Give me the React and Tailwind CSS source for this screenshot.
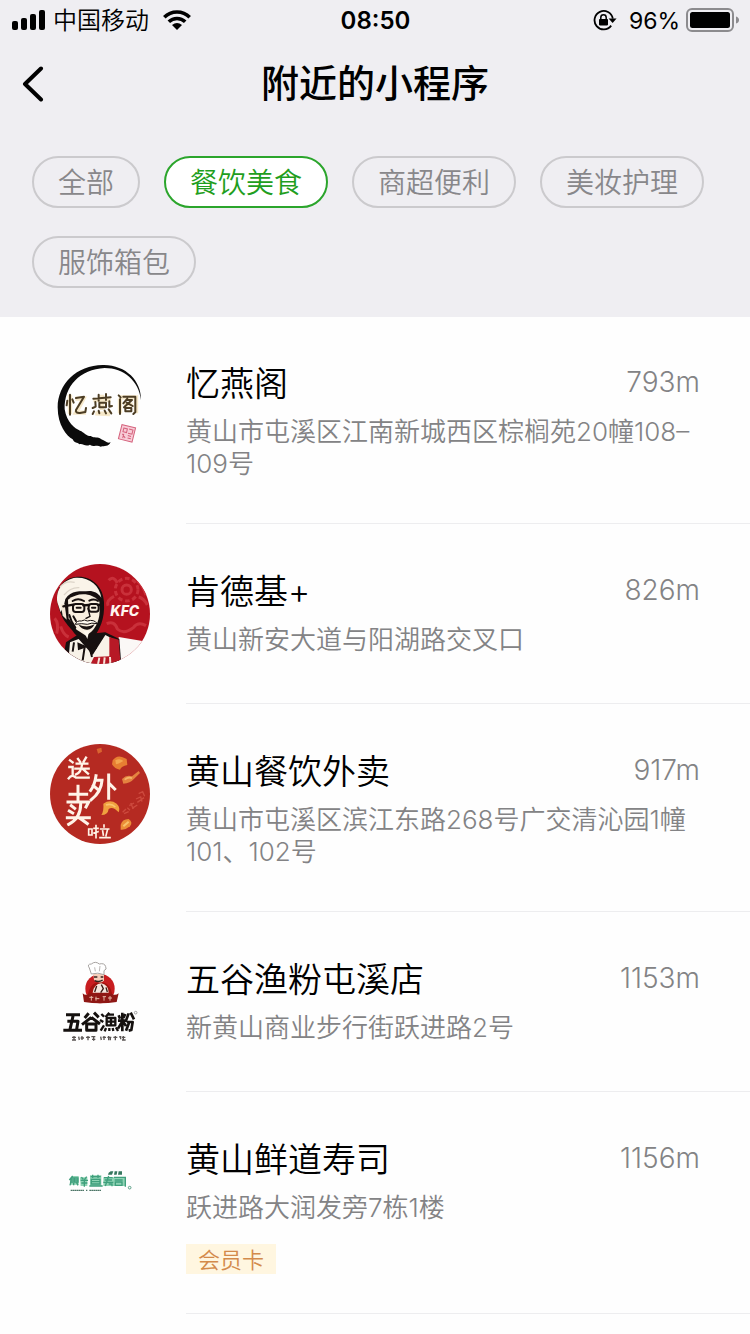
import React, { useState } from "react";

const CATEGORIES = ["全部", "餐饮美食", "商超便利", "美妆护理", "服饰箱包"];

function InkCircleLogo() {
  return (
    <svg viewBox="30 18 300 300" className="size-full" aria-hidden="true">
      <path
        d="M303 150 C304 92 258 46 192 45 C112 43 53 102 53 172 C53 226 80 258 98 268 C103 280 112 276 118 283 C128 279 136 292 150 284 C160 292 172 284 182 290 C194 287 205 291 212 277 C200 281 196 272 184 268 C172 258 164 266 152 258 C138 258 132 246 120 242 C104 236 80 216 74 178 C72 108 120 58 194 54 C252 54 296 92 303 150 Z"
        fill="#0b0b0b"
      />
      <g fill="none" stroke="#f4dfb4" strokeWidth="13" opacity="0.7">
        <path d="M90 134 V192 M106 146 H130 L108 188 H138" />
        <path d="M160 150 H212 M186 134 V180 M166 190 L210 192" />
        <path d="M236 142 H288 V190 M240 146 V190 M252 164 H278" />
      </g>
      <g fill="none" stroke="#4c3d24" strokeWidth="6" strokeLinecap="round" strokeLinejoin="round">
        <path d="M90 134 V194 M82 152 L80 166 M97 148 L101 158 M108 144 L132 140 L108 180 Q106 190 120 189 L136 186 L138 174" />
        <path d="M160 146 L212 142 M176 134 V152 M198 132 V150 M178 158 H198 V172 H178 Z M166 156 L167 170 L158 174 M208 154 V170 L216 168 M162 184 L158 192 M176 182 L178 190 M194 182 L198 190 M206 178 L214 190" />
        <path d="M240 148 V192 M236 136 L242 142 M250 140 H286 V186 L280 192 M262 146 L250 160 M260 150 H276 L252 172 M260 158 L278 168 M256 174 H274 V184 H256 Z" />
      </g>
      <g transform="rotate(14 261 250)" fill="none" stroke="#d4627c" strokeWidth="3">
        <rect x="240" y="228" width="42" height="44" fill="#f8ccd7" />
        <path d="M248 237 H259 V248 H248 Z M264 236 H276 V249 H264 M248 255 L259 265 M252 254 V267 M265 256 H275 M266 263 H276" />
      </g>
    </svg>
  );
}

function KfcLogo() {
  return (
    <svg viewBox="30 27 300 300" className="size-full" aria-hidden="true">
      <defs>
        <clipPath id="kfc-clip">
          <circle cx="180" cy="177" r="150" />
        </clipPath>
      </defs>
      <g clipPath="url(#kfc-clip)">
        <rect x="30" y="27" width="300" height="300" fill="#b5121f" />
        <g fill="none" stroke="#c9303a" strokeWidth="9">
          <circle cx="260" cy="104" r="14" />
          <circle cx="260" cy="104" r="34" strokeDasharray="14 8" />
          <path d="M206 76 Q220 60 232 84 M222 124 Q198 136 204 152 M292 78 Q310 92 318 120 M200 206 Q224 196 232 222 Q252 240 280 218 Q294 198 318 212 M296 126 Q312 130 322 150 M44 190 Q58 206 50 236 M62 214 Q70 240 86 246" />
        </g>
        <path d="M236 246 L330 262 V330 H236 Z" fill="#fbf8f6" />
        <path d="M66 330 L78 262 L112 240 L196 232 L238 252 L244 330 Z" fill="#161010" />
        <path d="M84 330 L90 262 L116 252 L158 300 L196 240 L212 248 L214 330 Z" fill="#f8f2e8" />
        <path d="M150 330 L162 306 L208 304 L208 246 L236 254 L242 330 Z" fill="#b71926" />
        <path d="M178 308 L174 328 M194 307 L192 328 M210 306 L211 328" stroke="#f8e6dc" strokeWidth="6" />
        <path d="M56 156 C42 112 62 72 106 66 C150 60 190 92 192 142 C195 196 178 224 160 250 L136 266 L104 236 C92 216 68 204 56 156 Z" fill="#17100f" />
        <path d="M52 142 C46 104 70 72 108 68 C148 66 178 90 184 128 C174 114 162 108 148 108 C120 110 94 104 76 132 L72 150 L62 172 Z" fill="#faf4e9" />
        <path d="M84 134 C112 110 158 112 178 140 C182 180 176 208 154 230 L138 242 L110 224 L86 190 Z" fill="#f9efdf" />
        <path d="M62 148 L74 148 L80 194 L68 182 Z" fill="#f5e8d6" />
        <path d="M60 96 Q76 76 104 82 M72 120 Q92 96 118 98" stroke="#dcd4c8" strokeWidth="4" fill="none" />
        <g fill="none" stroke="#17100f" strokeLinecap="round">
          <path d="M70 154 L100 149 M130 151 L146 150 M174 150 L188 150" strokeWidth="7" />
          <rect x="99" y="147" width="34" height="24" rx="8" strokeWidth="6" />
          <rect x="146" y="147" width="30" height="23" rx="8" strokeWidth="6" />
          <path d="M98 138 Q114 128 132 138 M148 137 Q162 130 174 138" strokeWidth="6" />
          <path d="M110 158 H122 M156 158 H166" strokeWidth="6" />
          <path d="M144 160 L150 184 L138 190" strokeWidth="4" />
          <path d="M88 180 Q92 198 106 218 M100 184 L108 198" strokeWidth="6" />
        </g>
        <path d="M106 208 Q110 196 124 198 Q134 192 142 198 Q162 192 172 206 Q154 202 142 208 Q126 204 106 208 Z" fill="#fffaf0" stroke="#17100f" strokeWidth="3" />
        <path d="M116 209 Q142 220 164 208 Q154 226 140 224 Q124 222 116 209 Z" fill="#17100f" />
        <path d="M130 226 Q140 232 148 226 L142 252 Z" fill="#fff9ee" />
        <path d="M112 262 L136 272 L168 260 L170 282 L142 276 L114 286 Z" fill="#17100f" />
        <path d="M134 276 L128 316 M148 276 L156 306 M102 262 L98 290" stroke="#17100f" strokeWidth="6" />
        <text x="211" y="182" fontSize="42" fontStyle="italic" fontWeight="800" fill="#fff5ef" className="font-['Inter']">
          KFC
        </text>
      </g>
    </svg>
  );
}

function TakeawayLogo() {
  return (
    <svg viewBox="30 27 300 300" className="size-full" aria-hidden="true">
      <circle cx="180" cy="177" r="150" fill="#b52a22" />
      <g fill="none" stroke="#fff3e8" strokeLinecap="square" strokeWidth="7">
        <path d="M90 76 L98 82 M88 96 H98 V118 M86 130 Q96 116 108 128 H146 M114 72 L120 80 M138 68 L131 80 M110 86 H142 M106 101 H146 M126 88 Q124 112 108 118 M128 102 L144 116" />
        <g strokeWidth="9">
          <path d="M168 122 Q164 150 152 166 M166 136 H186 Q184 170 154 194 M160 152 L174 164 M206 120 V190 M208 146 L224 162" />
          <path d="M90 178 H140 M114 154 V198 M84 201 H146 L138 216 M94 212 L104 220 M88 228 L98 234 M82 248 H148 M122 208 Q122 250 86 268 M120 250 L142 266" />
        </g>
        <g strokeWidth="5">
          <path d="M146 282 H156 V300 H146 Z M162 280 H174 M168 272 V308 M162 294 L174 290 M192 270 V276 M182 282 H206 M188 288 L190 300 M202 286 L198 302 M180 308 H210" />
        </g>
      </g>
      <path d="M218 76 Q230 60 246 66 L260 72 L262 90 Q244 94 240 104 Q224 102 216 88 Z" fill="#e77e32" />
      <path d="M226 76 Q240 68 250 78 Q238 86 228 88 Z" fill="#f4a650" />
      <path d="M170 42 L184 38 L186 50 L174 56 Z" fill="#d96430" />
      <path d="M246 132 Q260 118 276 124 L296 108 L300 114 L284 130 Q270 146 250 146 Z" fill="#e48340" />
      <path d="M254 134 Q266 124 276 130" stroke="#f4b56a" strokeWidth="5" fill="none" />
      <path d="M190 206 Q210 192 230 206 Q242 218 236 232 Q218 212 206 222 Q204 240 184 240 Q192 228 190 206 Z" fill="#f0a13f" />
      <path d="M198 210 Q214 204 226 216" stroke="#fac66f" strokeWidth="5" fill="none" />
      <path d="M242 270 Q246 252 266 252 Q280 262 270 274 Q256 286 242 284 Z" fill="#eb8f37" />
      <path d="M250 274 L266 260" stroke="#f9c26b" strokeWidth="6" />
      <path
        d="M248 232 L258 222 M252 236 L266 230 M268 212 L282 204 M272 204 L280 222 M276 220 L292 210 M288 192 L302 186 L306 200 M292 202 L312 188 M296 176 L308 170 L314 184 M262 218 L270 226"
        stroke="#cd4a3e"
        strokeWidth="4"
        fill="none"
      />
    </svg>
  );
}

function FishNoodleLogo() {
  return (
    <svg viewBox="30 6 300 300" className="size-full" aria-hidden="true">
      <circle cx="180" cy="116" r="44" fill="#c81d20" />
      <path d="M142 140 Q150 96 180 96 Q212 96 218 140 Z" fill="#a3130f" />
      <path d="M158 128 Q162 102 184 100 Q206 106 206 128 Z" fill="#f5e7df" />
      <path d="M170 108 L164 126 M184 104 L190 116 L182 128 M198 112 L202 126" stroke="#3b1a15" strokeWidth="4" fill="none" />
      <path d="M160 72 H192 V92 Q178 104 162 90 Z" fill="#f4cdb9" />
      <path d="M154 72 L148 54 Q140 42 154 42 Q166 32 178 42 Q194 38 197 50 Q202 58 192 62 L192 74 Q174 66 154 72 Z" fill="#fff" stroke="#a7a3a1" strokeWidth="3" />
      <path d="M164 52 L166 64 M180 48 L178 64" stroke="#bcb8b6" strokeWidth="3" />
      <path d="M162 81 H172 M182 81 H190 M164 92 Q176 98 188 90" stroke="#33201c" strokeWidth="4" fill="none" />
      <path d="M128 130 Q136 138 146 132 Q180 126 216 132 Q226 138 236 130 L230 156 Q180 164 132 156 Z" fill="#8e1714" />
      <path d="M148 142 H160 M154 138 V152 M168 140 V152 M166 146 H178 M188 140 H198 M192 140 V152 M204 144 H216 M210 138 V152" stroke="#e7b6a6" strokeWidth="3" />
      <g fill="none" stroke="#15110f" strokeWidth="9" strokeLinejoin="round">
        <path d="M78 194 H120 M100 194 L90 238 M82 214 H114 L110 238 M70 241 H126" />
        <path d="M146 190 L134 204 M162 188 L176 202 M154 202 L126 224 M154 202 L180 222 M140 222 H168 V241 H140 Z" />
        <path d="M184 192 L192 200 M180 210 L190 216 M182 242 L192 226 M208 188 L196 202 M202 194 H222 M200 204 H226 V226 H200 Z M213 204 V226 M200 215 H226 M198 234 L194 244 M208 234 V243 M218 234 L220 243 M228 232 L234 243" strokeWidth="7" />
        <path d="M236 196 L240 206 M256 192 L250 204 M234 212 H260 M247 188 V244 M246 216 L234 236 M250 216 L258 228 M266 190 L258 212 M272 188 L282 208 M260 216 H278 L274 240 L266 242 M268 216 L258 242" strokeWidth="8" />
      </g>
      <circle cx="287" cy="188" r="4" fill="none" stroke="#777" strokeWidth="2" />
      <path
        d="M96 262 H108 M102 258 V270 M96 270 H108 M116 260 L118 270 M122 264 H132 M126 258 V270 M138 262 H150 M144 258 V271 M154 260 H166 M156 268 H166 M161 258 V272 M182 260 L184 270 M188 262 H198 M192 258 V270 M202 262 H214 M206 258 V271 M211 264 V271 M220 262 H232 M226 258 V271 M238 260 H242 V268 M246 262 H256 M250 258 V271 M246 270 H257"
        stroke="#5b5654"
        strokeWidth="4"
      />
    </svg>
  );
}

function SushiLogo() {
  return (
    <svg viewBox="30 -24 300 300" className="size-full" aria-hidden="true">
      <path d="M90 116 L98 108 H116 V134 H92 Z M120 112 H142 V138 H122 Z M150 106 H184 V138 H150 Z M190 112 H258 V138 H190 Z" fill="#8fd3b4" />
      <g fill="none" stroke="#3f9f7c" strokeWidth="4">
        <path d="M98 108 L88 120 M94 114 H114 V126 H92 Z M92 120 H114 M103 112 V126 M92 128 L90 136 M101 129 V136 M110 128 L114 136" />
        <path d="M124 112 L130 118 M140 110 L134 118 M122 121 H144 M124 129 H142 M133 118 V140" />
        <path d="M152 110 H182 M158 104 V114 M174 104 V114 M154 118 H180 V132 H154 Z M154 125 H180 M148 138 H188" />
        <path d="M192 113 H218 M194 120 H216 M190 127 H220 M206 108 L196 138 M206 132 H216 V139 M222 112 H256 V140 M224 120 H248 M226 126 H246 V136 H226 Z" />
      </g>
      <path d="M206 98 L212 94 H220 L216 104 H204 Z M224 94 H232 L230 104 H222 Z M236 94 H246 V104 H234 Z" fill="#36775f" />
      <path d="M92 151 H132 M138 151 H142 M148 151 H184" stroke="#4c7566" strokeWidth="4" strokeDasharray="5 1" />
      <circle cx="269" cy="143" r="4" fill="none" stroke="#5b9e86" strokeWidth="3" />
    </svg>
  );
}

const SHOPS = [
  { name: "忆燕阁", distance: "793m", address: "黄山市屯溪区江南新城西区棕榈苑20幢108–109号", Logo: InkCircleLogo },
  { name: "肯德基+", distance: "826m", address: "黄山新安大道与阳湖路交叉口", Logo: KfcLogo },
  { name: "黄山餐饮外卖", distance: "917m", address: "黄山市屯溪区滨江东路268号广交清沁园1幢101、102号", Logo: TakeawayLogo },
  { name: "五谷渔粉屯溪店", distance: "1153m", address: "新黄山商业步行街跃进路2号", Logo: FishNoodleLogo },
  { name: "黄山鲜道寿司", distance: "1156m", address: "跃进路大润发旁7栋1楼", tag: "会员卡", Logo: SushiLogo },
];

function StatusBar() {
  return (
    <div className="grid h-10 grid-cols-[1fr_auto_1fr] items-center pr-[11px] pl-3">
      <div className="flex items-center">
        <svg viewBox="0 0 33 20" className="h-5 w-[33px]" aria-hidden="true">
          <rect x="0" y="11" width="6" height="9" rx="2" />
          <rect x="9" y="8" width="6" height="12" rx="2" />
          <rect x="18" y="4" width="6" height="16" rx="2" />
          <rect x="27" y="0" width="6" height="20" rx="2" />
        </svg>
        <span className="ml-2 pt-0.5 text-2xl font-[350]">中国移动</span>
        <svg viewBox="0 0 28 20" className="ml-3.5 h-5 w-7" aria-hidden="true">
          <g fill="none" stroke="#000" strokeWidth="3.6">
            <path d="M1.3 7.2 A18 18 0 0 1 26.7 7.2" />
            <path d="M5.8 11.8 A11.7 11.7 0 0 1 22.2 11.8" />
          </g>
          <path d="M9 15 Q14 11.2 19 15 L14 20 Z" />
        </svg>
      </div>
      <time className="pt-0.5 text-2xl font-semibold">08:50</time>
      <div className="flex items-center justify-end">
        <svg viewBox="0 0 24 22" className="h-[22px] w-6" aria-hidden="true">
          <path d="M18.2 16.6 A9.2 9.2 0 1 1 19.8 9.6" fill="none" stroke="#000" strokeWidth="1.8" />
          <path d="M15.6 9.4 H23.6 L19.6 14 Z" />
          <rect x="6" y="10" width="9" height="6.4" rx="0.8" />
          <path d="M7.8 10.4 V8.4 A2.7 2.7 0 0 1 13.2 8.4 V10.4" fill="none" stroke="#000" strokeWidth="1.5" />
        </svg>
        <span className="ml-3 pt-0.5 text-[23px] leading-8">96%</span>
        <svg viewBox="0 0 53 24" className="ml-1.5 h-6 w-[53px]" aria-hidden="true">
          <rect x="1" y="1" width="46" height="22" rx="5" fill="none" stroke="#8c8b8e" strokeWidth="2" />
          <rect x="4" y="4" width="40" height="16" rx="2.5" />
          <path d="M50 8.5 Q53 9.5 53 12 Q53 14.5 50 15.5 Z" fill="#8c8b8e" />
        </svg>
      </div>
    </div>
  );
}

function ShopRow({ shop }) {
  const { name, distance, address, tag, Logo } = shop;
  return (
    <li className="flex pl-[50px]">
      <div className="mt-10 size-[100px] shrink-0">
        <Logo />
      </div>
      <div className="ml-9 flex min-h-[180px] min-w-0 flex-1 flex-col items-start border-b border-[#ededef] pt-10 pr-[50px] pb-[39px]">
        <div className="flex w-full items-start justify-between">
          <h2 className="text-[34px] leading-[56px] font-[350]">{name}</h2>
          <span className="text-[28px] leading-[52px] font-light text-[#838385]">{distance}</span>
        </div>
        <p className="mt-1 mb-1 text-[26px] leading-8 font-[350] text-[#838385]">{address}</p>
        {tag && (
          <span className="mt-4 h-[30px] bg-[#fff6e0] px-3 text-[22px] leading-8 font-[350] text-[#d38a4b]">{tag}</span>
        )}
      </div>
    </li>
  );
}

export default function App() {
  const [active, setActive] = useState("餐饮美食");
  return (
    <div
      lang="zh-CN"
      className="min-h-screen bg-[#fefefe] font-['Inter','Noto_Sans_CJK_SC',sans-serif] text-black"
    >
      <header className="bg-[#efeef2]">
        <StatusBar />
        <div className="grid h-[88px] grid-cols-[48px_1fr_48px] items-center px-[14px]">
          <button type="button" aria-label="返回" className="h-12 w-12 pl-2">
            <svg viewBox="0 0 22 36" className="h-9 w-[22px]" fill="none" aria-hidden="true">
              <path d="M19 2.5 L3 18 L19 33.5" stroke="#000" strokeWidth="4" strokeLinecap="round" strokeLinejoin="round" />
            </svg>
          </button>
          <h1 className="pb-0.5 text-center text-[38px] leading-[56px] font-medium">附近的小程序</h1>
        </div>
        <nav className="flex flex-wrap gap-x-6 gap-y-7 px-8 pt-7 pb-[29px]">
          {CATEGORIES.map((label) => (
            <button
              key={label}
              type="button"
              aria-pressed={active === label}
              onClick={() => setActive(label)}
              className={
                active === label
                  ? "h-[52px] rounded-full border-2 border-[#2ba52c] bg-white px-6 pt-0.5 text-[28px] leading-[46px] font-[350] text-[#1f9e20]"
                  : "h-[52px] rounded-full border-2 border-[#cbcacd] px-6 pt-0.5 text-[28px] leading-[46px] font-[350] text-[#88878a]"
              }
            >
              {label}
            </button>
          ))}
        </nav>
      </header>
      <main className="-mt-px">
        <ul>
          {SHOPS.map((shop) => (
            <ShopRow key={shop.name} shop={shop} />
          ))}
        </ul>
      </main>
    </div>
  );
}
